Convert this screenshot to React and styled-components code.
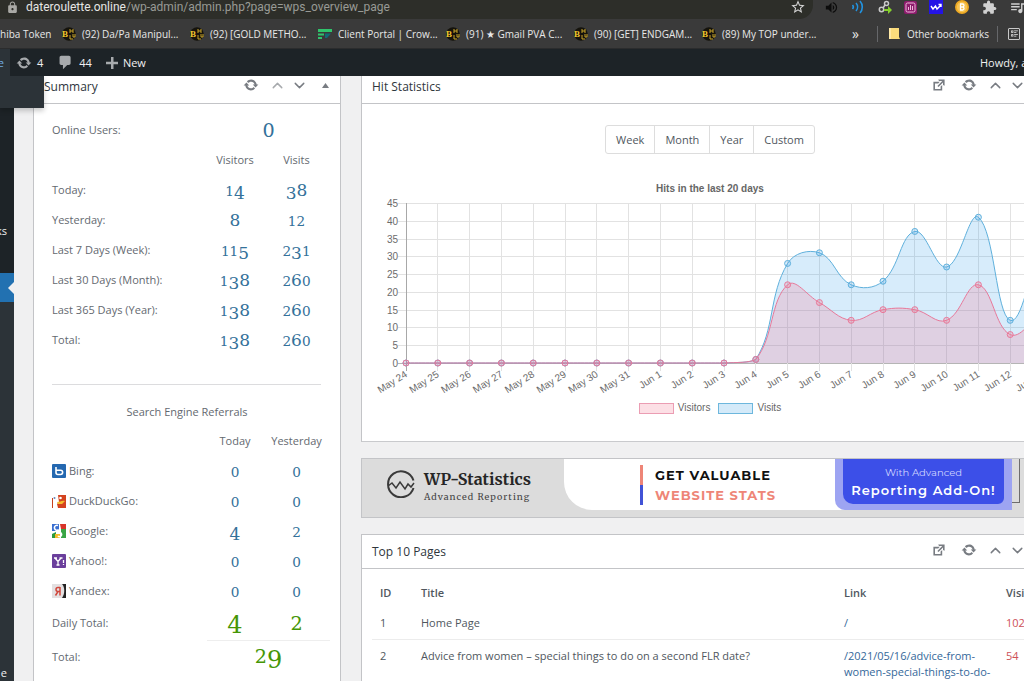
import React from "react";
import styled, { createGlobalStyle } from "styled-components";
import {
  MdLock,
  MdStarBorder,
  MdVolumeUp,
  MdExtension,
  MdQueueMusic,
} from "react-icons/md";
import { RiListCheck2 } from "react-icons/ri";
import { ChevronDown, ChevronUp } from "lucide-react";

const summary = [
  ["Today:", "14", "38"],
  ["Yesterday:", "8", "12"],
  ["Last 7 Days (Week):", "115", "231"],
  ["Last 30 Days (Month):", "138", "260"],
  ["Last 365 Days (Year):", "138", "260"],
  ["Total:", "138", "260"],
];

const bookmarks = [
  { label: "(92) Da/Pa Manipul...", icon: "bhw" },
  { label: "(92) [GOLD METHO...", icon: "bhw" },
  { label: "Client Portal | Crow...", icon: "portal" },
  { label: "(91) ★ Gmail PVA C...", icon: "bhw" },
  { label: "(90) [GET] ENDGAM...", icon: "bhw" },
  { label: "(89) My TOP under...", icon: "bhw" },
];

const days = [
  "May 24", "May 25", "May 26", "May 27", "May 28", "May 29", "May 30",
  "May 31", "Jun 1", "Jun 2", "Jun 3", "Jun 4", "Jun 5", "Jun 6", "Jun 7",
  "Jun 8", "Jun 9", "Jun 10", "Jun 11", "Jun 12", "Jun 13",
];
const visitors = [0, 0, 0, 0, 0, 0, 0, 0, 0, 0, 0, 1, 22, 17, 12, 15, 15, 12, 22, 8, 14];
const visits = [0, 0, 0, 0, 0, 0, 0, 0, 0, 0, 0, 1, 28, 31, 22, 23, 37, 27, 41, 12, 34];

/* ---------- icons ---------- */

const UpdateIcon = ({ size = 16 }) => (
  <svg width={size} height={size} viewBox="0 0 20 20" fill="currentColor">
    <path d="M10.2 3.28c3.53 0 6.43 2.61 6.92 6h2.08l-3.5 4-3.5-4h2.32c-.45-1.97-2.21-3.45-4.32-3.45-1.45 0-2.73.71-3.54 1.78L4.95 5.66C6.23 4.2 8.11 3.28 10.2 3.28zm-.4 13.44c-3.52 0-6.43-2.61-6.92-6H.8l3.5-4c1.17 1.33 2.33 2.67 3.5 4H5.48c.45 1.97 2.21 3.45 4.32 3.45 1.45 0 2.73-.71 3.54-1.78l1.71 1.95c-1.28 1.46-3.15 2.38-5.25 2.38z" />
  </svg>
);

const CommentIcon = () => (
  <svg width="17" height="17" viewBox="0 0 20 20" fill="currentColor">
    <path d="M5 2h9c1.1 0 2 .9 2 2v7c0 1.1-.9 2-2 2h-2l-5 5v-5H5c-1.1 0-2-.9-2-2V4c0-1.1.9-2 2-2z" />
  </svg>
);

const PlusIcon = () => (
  <svg width="12" height="12" viewBox="0 0 12 12" fill="currentColor">
    <path d="M5 0h2.500v4.700H12v2.500H7.500V12H5V7.200H0V4.700h5z" />
  </svg>
);

const ExternalIcon = () => (
  <svg width="16" height="16" viewBox="0 0 20 20" fill="currentColor">
    <path d="M9 3h8v8l-2-1V6.920l-5.600 5.590-1.410-1.410L14.080 5H10zm3 12v-3l2-2v7H3V6h8L9 8H5v7h7z" />
  </svg>
);

const TriangleIcon = () => (
  <svg width="7" height="5" viewBox="0 0 7 5" fill="currentColor">
    <path d="M3.500 0 7 5H0z" />
  </svg>
);

const BhwIcon = () => (
  <svg width="14" height="14" viewBox="0 0 14 14">
    <circle cx="7" cy="7" r="6.800" fill="#15130c" />
    <text x="0" y="10" fontSize="9" fontWeight="700" fontFamily="Liberation Serif, serif" fill="#f1c62f">
      B
    </text>
    <path d="M8 2v4M11 2v4M8 4h3M8 8v4M11 7v3M13 7v3M8 12h3M11 10h2" stroke="#c9a52a" strokeWidth="1" fill="none" />
  </svg>
);

const PortalIcon = () => (
  <svg width="14" height="14" viewBox="0 0 14 14">
    <path d="M0 2h14v3H0z" fill="#2fc46c" />
    <path d="M0 6.500h6v2H0zM0 10h4v2H0z" fill="#2fc46c" />
    <path d="M7 6.500h6L9 11H7z" fill="#116a75" />
  </svg>
);

const WavesIcon = () => (
  <svg width="14" height="14" viewBox="0 0 14 14" fill="none" stroke="#2293e0" strokeWidth="1.600">
    <path d="M1.500 5a3 3 0 0 1 0 4M5 3a6 6 0 0 1 0 8M9 1a9 9 0 0 1 0 12" />
  </svg>
);

const LinkDotsIcon = () => (
  <svg width="14" height="14" viewBox="0 0 14 14" fill="none">
    <circle cx="8.500" cy="3.500" r="2" stroke="#c9c9c9" strokeWidth="1.500" />
    <circle cx="3.500" cy="9.500" r="2.200" stroke="#c9c9c9" strokeWidth="1.500" />
    <path d="M7 5 5 8" stroke="#c9c9c9" strokeWidth="1.500" />
    <path d="M6 9h4V6l4 4-4 4v-3H6z" fill="#86d02d" />
  </svg>
);

const ChartAppIcon = () => (
  <svg width="13" height="13" viewBox="0 0 13 13" fill="none">
    <rect width="13" height="13" rx="2" fill="#8c1c6c" />
    <rect x="2" y="2" width="9" height="9" rx="1.500" stroke="#f0b7dc" />
    <path d="M4.500 6v3M6.500 4v5M8.500 5v4" stroke="#f0b7dc" />
  </svg>
);

const WalletIcon = () => (
  <svg width="14" height="14" viewBox="0 0 14 14" fill="none">
    <rect width="14" height="14" fill="#2413e6" />
    <path d="m2 6 2 3 2.500-3L8 9l4-4M9.500 4.500H12V7" stroke="#fff" strokeWidth="1.400" />
  </svg>
);

const CoinIcon = () => (
  <svg width="14" height="14" viewBox="0 0 14 14">
    <circle cx="7" cy="7" r="7" fill="#eda923" />
    <circle cx="7" cy="7" r="5.200" fill="#f6c352" />
    <path d="M5.500 4v6M5 4h2.500a1.500 1.500 0 0 1 0 3H5.500M7.500 7a1.500 1.500 0 0 1 0 3H5" stroke="#fff" strokeWidth="1.300" fill="none" />
  </svg>
);

const FolderIcon = () => (
  <svg width="11" height="13" viewBox="0 0 11 13">
    <path d="M0 1h10v9l1 2H0z" fill="#fbdc7c" />
    <path d="M0 1h2v11H0z" fill="#ffe9a6" />
  </svg>
);

const BingIcon = () => (
  <svg width="14" height="14" viewBox="0 0 14 14">
    <rect width="14" height="14" rx="1" fill="#2468b0" />
    <path d="M4 3v5.500M4 6.200h4.500a2 2 0 0 1 0 4.300H6a2 2 0 0 1-2-2" stroke="#fff" strokeWidth="1.600" fill="none" />
  </svg>
);

const DuckIcon = () => (
  <svg width="14" height="14" viewBox="0 0 14 14">
    <rect width="14" height="14" fill="#fff" />
    <path d="M0 4h1v10H0z" fill="#c8401d" />
    <circle cx="2.500" cy="4" r="1" fill="#6a87b8" />
    <path d="M6 1h8v13H6l-1-4 2-2z" fill="#d4431f" />
    <path d="M5 8c3 0 5-2 8-1l-3 3H6z" fill="#f6be2c" />
    <circle cx="8.500" cy="4" r="1.300" fill="#fff" />
  </svg>
);

const GoogleIcon = () => (
  <svg width="14" height="14" viewBox="0 0 14 14">
    <rect width="14" height="14" fill="#fff" />
    <path d="M0 0h7v7H0z" fill="#3a6fd0" />
    <path d="M8 0h6v5H9z" fill="#d8342a" />
    <path d="M9 5h5v9H9z" fill="#3aa545" />
    <path d="M0 10l4-2v6H0z" fill="#2d9a3f" />
    <path d="M3 10h5v4H3z" fill="#f4bc2c" />
    <path d="M6 1.500A2.500 2.500 0 1 0 6 6l3 3a2 2 0 0 1-3 3" fill="none" stroke="#fff" strokeWidth="1.600" />
  </svg>
);

const YahooIcon = () => (
  <svg width="14" height="14" viewBox="0 0 14 14">
    <rect width="14" height="14" rx="1" fill="#6b3f9c" />
    <path d="m3 4 3 3.500L9 4M6 7.500V11M2 4h3M7.500 4h3M4.500 11h3M11.500 6v3M11.500 10v1" stroke="#fff" strokeWidth="1.300" fill="none" />
  </svg>
);

const YandexIcon = () => (
  <svg width="14" height="14" viewBox="0 0 14 14">
    <rect width="14" height="14" fill="#222" />
    <path d="M0 0h10c3 3 3 10 0 14H0z" fill="#e3e0e1" />
    <path d="M8 3v8.500M8 3.500H6a2 2 0 0 0 0 4h2M6 7.500 3.500 11.500" stroke="#d0473c" strokeWidth="1.500" fill="none" />
  </svg>
);

const StatsLogo = () => (
  <svg width="28" height="28" viewBox="0 0 28 28" fill="none" stroke="#3a3a3a" strokeWidth="2">
    <path d="M26.500 10.500A13 13 0 1 0 26.500 18" />
    <path d="m1 16 4-3 4 5 4-6 5 7 3-5 3 3 3-4" strokeWidth="1.500" />
  </svg>
);

const engines = [
  { name: "Bing:", Icon: BingIcon, today: "0", yesterday: "0" },
  { name: "DuckDuckGo:", Icon: DuckIcon, today: "0", yesterday: "0" },
  { name: "Google:", Icon: GoogleIcon, today: "4", yesterday: "2" },
  { name: "Yahoo!:", Icon: YahooIcon, today: "0", yesterday: "0" },
  { name: "Yandex:", Icon: YandexIcon, today: "0", yesterday: "0" },
];

/* ---------- chart ---------- */

const X0 = 34;
const X1 = 670;
const Y0 = 167;
const Y1 = 7;
const MAX = 45;
const px = (i) => X0 + (i * (X1 - X0)) / (days.length - 1);
const py = (v) => Y0 - (v * (Y0 - Y1)) / MAX;
const clampY = (y) => Math.min(Y0, Math.max(Y1, y));

// smooth line through the points, tension 0.4
function curve(values) {
  const pts = values.map((v, i) => ({ x: px(i), y: py(v) }));
  const ctrl = pts.map((p, i) => {
    const prev = pts[i - 1] || p;
    const next = pts[i + 1] || p;
    const d01 = Math.hypot(p.x - prev.x, p.y - prev.y);
    const d12 = Math.hypot(next.x - p.x, next.y - p.y);
    const fa = (0.4 * d01) / (d01 + d12);
    const fb = (0.4 * d12) / (d01 + d12);
    return {
      inX: p.x - fa * (next.x - prev.x),
      inY: clampY(p.y - fa * (next.y - prev.y)),
      outX: p.x + fb * (next.x - prev.x),
      outY: clampY(p.y + fb * (next.y - prev.y)),
    };
  });
  return pts.reduce((d, p, i) => {
    if (i === 0) return `M${p.x},${p.y}`;
    const a = ctrl[i - 1];
    const b = ctrl[i];
    return `${d}C${a.outX},${a.outY} ${b.inX},${b.inY} ${p.x},${p.y}`;
  }, "");
}

function Series({ values, stroke, fill }) {
  const line = curve(values);
  return (
    <g>
      <path d={`${line}L${X1},${Y0}L${X0},${Y0}Z`} fill={fill} />
      <path d={line} fill="none" stroke={stroke} />
      {values.map((v, i) => (
        <circle key={days[i]} cx={px(i)} cy={py(v)} r="3" fill={fill} stroke={stroke} />
      ))}
    </g>
  );
}

function HitsChart() {
  const ticks = [0, 5, 10, 15, 20, 25, 30, 35, 40, 45];
  return (
    <ChartSvg viewBox="0 0 676 202" role="img" aria-label="Hits in the last 20 days">
      {ticks.map((t) => (
        <g key={t}>
          <line
            x1={X0 - 8}
            x2={X1}
            y1={Math.round(py(t)) + 0.5}
            y2={Math.round(py(t)) + 0.5}
            stroke={t === 0 ? "#b5b5b5" : "#e2e2e2"}
          />
          <text x={X0 - 8} y={Math.round(py(t)) + 4} textAnchor="end">
            {t}
          </text>
        </g>
      ))}
      {days.map((day, i) => (
        <g key={day}>
          <line
            x1={Math.floor(px(i)) + 0.5}
            x2={Math.floor(px(i)) + 0.5}
            y1={Y1}
            y2={Y0 + 8}
            stroke={i === 0 ? "#a8a8a8" : "#e2e2e2"}
          />
          <text
            textAnchor="end"
            transform={`translate(${px(i) + 2} ${Y0 + 13}) rotate(-32)`}
          >
            {day}
          </text>
        </g>
      ))}
      <Series values={visits} stroke="#5fb0dc" fill="rgba(54, 162, 235, 0.2)" />
      <Series values={visitors} stroke="#e8799a" fill="rgba(255, 99, 132, 0.2)" />
    </ChartSvg>
  );
}

/* ---------- parts ---------- */

// Old style figures: 0-2 sit at x-height, 3 4 5 7 9 hang below the line
function Figures({ children, size }) {
  return (
    <Figure $size={size}>
      {children.match(/[0-2]+|[34579]+|[68]+/g).map((run, i) => {
        if (/[0-2]/.test(run)) return <SmallDigits key={i}>{run}</SmallDigits>;
        if (/[34579]/.test(run)) return <LowDigits key={i}>{run}</LowDigits>;
        return run;
      })}
    </Figure>
  );
}

function PanelHeader({ title, external, muted }) {
  return (
    <Header>
      <PanelTitle>{title}</PanelTitle>
      <Actions>
        {external && (
          <ActionButton $wide aria-label="Open report">
            <ExternalIcon />
          </ActionButton>
        )}
        <ActionButton $wide aria-label="Refresh">
          <UpdateIcon />
        </ActionButton>
        <ActionButton $muted={muted} aria-label="Move up">
          <ChevronUp size={17} strokeWidth={2} />
        </ActionButton>
        <ActionButton aria-label="Move down">
          <ChevronDown size={17} strokeWidth={2} />
        </ActionButton>
        <ActionButton $wide aria-label="Toggle panel">
          <TriangleIcon />
        </ActionButton>
      </Actions>
    </Header>
  );
}

const StatColumns = () => (
  <colgroup>
    <col />
    <FirstStatCol />
    <SecondStatCol />
  </colgroup>
);

function App() {
  return (
    <Window>
      <GlobalStyle />
      <Toolbar>
        <AddressBar>
          <MdLock size={13} color="#a9a9a5" />
          <Url>
            <b>dateroulette.online</b>/wp-admin/admin.php?page=wps_overview_page
          </Url>
          <MdStarBorder size={16} color="#d5d5d5" />
        </AddressBar>
        <Extensions>
          <MdVolumeUp size={15} color="#0c0c0c" />
          <WavesIcon />
          <LinkDotsIcon />
          <ChartAppIcon />
          <WalletIcon />
          <CoinIcon />
          <MdExtension size={15} color="#d0d0d0" />
          <MdQueueMusic size={17} color="#d0d0d0" />
        </Extensions>
      </Toolbar>

      <BookmarkBar>
        <FirstBookmark href="#">hiba Token</FirstBookmark>
        {bookmarks.map(({ label, icon }) => (
          <Bookmark href="#" key={label}>
            {icon === "bhw" ? <BhwIcon /> : <PortalIcon />}
            {label}
          </Bookmark>
        ))}
        <BookmarkEnd>
          <MoreButton>»</MoreButton>
          <OtherBookmarks>
            <FolderIcon />
            Other bookmarks
          </OtherBookmarks>
          <ReadingList aria-label="Reading list">
            <RiListCheck2 size={9} />
          </ReadingList>
        </BookmarkEnd>
      </BookmarkBar>

      <AdminBar>
        <SiteName href="#">e</SiteName>
        <AdminItem href="#">
          <UpdateIcon />4
        </AdminItem>
        <AdminItem href="#">
          <CommentIcon />
          44
        </AdminItem>
        <AdminItem href="#">
          <PlusIcon />
          New
        </AdminItem>
        <Account href="#">Howdy, a</Account>
      </AdminBar>

      <Body>
        <SiteMenu />
        <SideMenu>
          <MenuTop>
            <MenuText href="#">ks</MenuText>
          </MenuTop>
          <MenuCurrent />
          <MenuBottom>
            <MenuText href="#">e</MenuText>
          </MenuBottom>
        </SideMenu>

        <Dashboard>
          <Panel>
            <PanelHeader title="Summary" muted />
            <SummaryBody>
              <StatTable>
                <StatColumns />
                <tbody>
                  <tr>
                    <StatLabel>Online Users:</StatLabel>
                    <StatCell colSpan={2}>
                      <Figures size={24}>0</Figures>
                    </StatCell>
                  </tr>
                  <tr>
                    <td />
                    <StatHead>Visitors</StatHead>
                    <StatHead>Visits</StatHead>
                  </tr>
                  {summary.map(([label, a, b]) => (
                    <tr key={label}>
                      <StatLabel>{label}</StatLabel>
                      <StatCell>
                        <Figures size={17}>{a}</Figures>
                      </StatCell>
                      <StatCell>
                        <Figures size={17}>{b}</Figures>
                      </StatCell>
                    </tr>
                  ))}
                </tbody>
              </StatTable>
              <Divider />
              <Caption>Search Engine Referrals</Caption>
              <StatTable>
                <StatColumns />
                <tbody>
                  <tr>
                    <td />
                    <StatHead>Today</StatHead>
                    <StatHead>Yesterday</StatHead>
                  </tr>
                  {engines.map(({ name, Icon, today, yesterday }) => (
                    <tr key={name}>
                      <StatLabel>
                        <EngineName>
                          <Icon />
                          {name}
                        </EngineName>
                      </StatLabel>
                      <StatCell>
                        <Figures size={17}>{today}</Figures>
                      </StatCell>
                      <StatCell>
                        <Figures size={17}>{yesterday}</Figures>
                      </StatCell>
                    </tr>
                  ))}
                  <TotalRow>
                    <StatLabel>Daily Total:</StatLabel>
                    <StatCell $total>
                      <Figures size={24}>4</Figures>
                    </StatCell>
                    <StatCell $total>
                      <Figures size={24}>2</Figures>
                    </StatCell>
                  </TotalRow>
                  <TotalRow>
                    <StatLabel>Total:</StatLabel>
                    <StatCell $total $ruled colSpan={2}>
                      <Figures size={24}>29</Figures>
                    </StatCell>
                  </TotalRow>
                </tbody>
              </StatTable>
            </SummaryBody>
          </Panel>

          <MainColumn>
            <Panel>
              <PanelHeader title="Hit Statistics" external />
              <ChartBody>
                <RangeGroup>
                  {["Week", "Month", "Year", "Custom"].map((range) => (
                    <RangeButton key={range}>{range}</RangeButton>
                  ))}
                </RangeGroup>
                <ChartTitle>Hits in the last 20 days</ChartTitle>
                <HitsChart />
                <Legend>
                  <Swatch $line="#eb9db3" $fill="#fcdfe5" />
                  <span>Visitors</span>
                  <Swatch $line="#6db7dd" $fill="#d4eaf9" />
                  <span>Visits</span>
                </Legend>
              </ChartBody>
            </Panel>

            <Banner>
              <Brand>
                <StatsLogo />
                <div>
                  <BrandName>WP-Statistics</BrandName>
                  <BrandTag>Advanced Reporting</BrandTag>
                </div>
              </Brand>
              <Promo>
                <PromoText>
                  GET VALUABLE
                  <em>WEBSITE STATS</em>
                </PromoText>
              </Promo>
              <AddOnBack>
                <AddOn href="#">
                  With Advanced
                  <b>Reporting Add-On!</b>
                </AddOn>
              </AddOnBack>
              <BannerFrame />
            </Banner>

            <Panel>
              <PanelHeader title="Top 10 Pages" external />
              <PagesBody>
                <PagesTable>
                  <colgroup>
                    <IdCol />
                    <col />
                    <LinkCol />
                    <VisitsCol />
                  </colgroup>
                  <thead>
                    <tr>
                      <th>ID</th>
                      <th>Title</th>
                      <th>Link</th>
                      <th>Visits</th>
                    </tr>
                  </thead>
                  <tbody>
                    <tr>
                      <td>1</td>
                      <td>Home Page</td>
                      <td>
                        <PageLink href="#">/</PageLink>
                      </td>
                      <VisitCount>102</VisitCount>
                    </tr>
                    <tr>
                      <td>2</td>
                      <td>Advice from women – special things to do on a second FLR date?</td>
                      <td>
                        <PageLink href="#">/2021/05/16/advice-from-women-special-things-to-do-</PageLink>
                      </td>
                      <VisitCount>54</VisitCount>
                    </tr>
                  </tbody>
                </PagesTable>
              </PagesBody>
            </Panel>
          </MainColumn>
        </Dashboard>
      </Body>
    </Window>
  );
}

const GlobalStyle = createGlobalStyle`
  * {
    box-sizing: border-box;
  }

  body {
    margin: 0;
    overflow: hidden;
    background: #f0f0f1;
    color: #50575e;
    font-family: "Segoe UI", "Open Sans", sans-serif;
    font-size: 11px;
    line-height: 16px;
  }

  a {
    color: inherit;
    text-decoration: none;
  }

  button {
    padding: 0;
    border: 0;
    background: none;
    color: inherit;
    font: inherit;
    cursor: pointer;
  }

  svg {
    flex: none;
  }
`;

const Window = styled.div`
  display: flex;
  flex-direction: column;
  height: 100vh;
  overflow: hidden;
`;

const Toolbar = styled.div`
  display: flex;
  flex: none;
  height: 19px;
  background: #3a3a3a;
`;

const AddressBar = styled.div`
  display: flex;
  flex: 1;
  align-items: center;
  padding: 0 7px 5px 6px;
  border-bottom-right-radius: 14px;
  background: #2d2e29;
`;

const Url = styled.span`
  flex: 1;
  padding-left: 7px;
  color: #989a95;
  font-family: "Segoe UI", Roboto, sans-serif;
  font-size: 12px;

  b {
    color: #e6e6e4;
    font-weight: 400;
  }
`;

const Extensions = styled.div`
  display: flex;
  flex: none;
  align-items: center;
  justify-content: space-between;
  width: 213px;
  margin-right: -2px;
  padding: 0 0 5px 11px;
`;

const BookmarkBar = styled.nav`
  display: flex;
  flex: none;
  align-items: center;
  height: 30px;
  border-bottom: 1px solid #2b2c2d;
  background: #3a3a3a;
  color: #e8e8e8;
  font-size: 10px;
  white-space: nowrap;
`;

const FirstBookmark = styled.a`
  width: 62px;
`;

const Bookmark = styled.a`
  display: flex;
  align-items: center;
  gap: 6px;
  width: 128px;
`;

const BookmarkEnd = styled.div`
  display: flex;
  align-items: center;
  margin-left: auto;
`;

const MoreButton = styled.button`
  padding-right: 18px;
  font-size: 14px;
`;

const OtherBookmarks = styled.button`
  display: flex;
  align-items: center;
  gap: 7px;
  padding: 0 8px 0 11px;
  border: solid #66676a;
  border-width: 0 1px;
`;

const ReadingList = styled.button`
  display: flex;
  align-items: center;
  justify-content: center;
  width: 12px;
  height: 12px;
  margin: 0 4px 0 10px;
  border: 1px solid #c8c8c8;
  border-radius: 1px;
`;

const AdminBar = styled.header`
  display: flex;
  flex: none;
  align-items: center;
  position: relative;
  z-index: 2;
  height: 27px;
  background: #1d2327;
  color: #f0f0f1;

  svg {
    color: #a7aaad;
  }
`;

const SiteName = styled.a`
  display: flex;
  justify-content: flex-end;
  width: 10px;
  margin-right: 6px;
  padding-right: 6px;
  background: #2c3338;
  color: #72aee6;
  line-height: 27px;
`;

const AdminItem = styled.a`
  display: flex;
  align-items: center;
  gap: 5px;
  margin-right: 14px;
`;

const Account = styled.a`
  width: 44px;
  margin-left: auto;
  white-space: nowrap;
`;

const Body = styled.div`
  display: flex;
  flex: 1;
  position: relative;
  min-height: 0;
`;

// open site menu hanging under the admin bar
const SiteMenu = styled.div`
  position: absolute;
  top: 0;
  left: 0;
  z-index: 1;
  width: 44px;
  height: 32px;
  background: #2c3338;
  box-shadow: 0 3px 5px rgba(0, 0, 0, 0.2);
`;

const SideMenu = styled.nav`
  display: flex;
  flex: none;
  flex-direction: column;
  width: 14px;
  background: #2c3338;
  color: #f0f0f1;
`;

const MenuTop = styled.div`
  display: flex;
  align-items: flex-end;
  height: 197px;
  padding-bottom: 34px;
  background: #1d2327;
`;

const MenuCurrent = styled.div`
  display: flex;
  align-items: center;
  justify-content: flex-end;
  height: 29px;
  background: #2271b1;

  &::after {
    content: "";
    border: solid transparent;
    border-width: 6px 6px 6px 0;
    border-right-color: #f0f0f1;
  }
`;

const MenuBottom = styled.div`
  display: flex;
  flex: 1;
  align-items: flex-end;
`;

const MenuText = styled.a`
  display: flex;
  justify-content: flex-end;
  width: 7px;
`;

// scrolled a little, so the first panels start under the admin bar
const Dashboard = styled.main`
  display: grid;
  flex: none;
  grid-template-columns: 308px 1fr;
  gap: 20px;
  width: calc(100% + 21px);
  height: calc(100% + 7px);
  margin-top: -7px;
  padding-left: 19px;
`;

const MainColumn = styled.div`
  display: grid;
  grid-template-rows: 373px 60px 1fr;
  gap: 16px;
`;

const Panel = styled.section`
  border: 1px solid #c3c4c7;
  border-bottom-color: #c9cacd;
  background: #fff;
`;

const Header = styled.div`
  display: flex;
  align-items: center;
  justify-content: space-between;
  height: 34px;
  border-bottom: 1px solid #c3c4c7;
`;

const PanelTitle = styled.h2`
  margin: 0;
  padding-left: 10px;
  color: #2f363c;
  font-size: 12px;
  font-weight: 500;
`;

const Actions = styled.div`
  display: flex;
  align-self: flex-start;
`;

const ActionButton = styled.button`
  display: flex;
  align-items: center;
  justify-content: center;
  width: ${({ $wide }) => ($wide ? 30 : 22)}px;
  height: 30px;
  color: ${({ $muted }) => ($muted ? "#a7aaad" : "#787c82")};
`;

const SummaryBody = styled.div`
  padding: 11px 10px 0 18px;
`;

const StatTable = styled.table`
  width: 100%;
  border-collapse: collapse;
  table-layout: fixed;

  tr {
    height: 30px;
  }

  td,
  th {
    padding: 0;
  }
`;

const FirstStatCol = styled.col`
  width: 56px;
`;

const SecondStatCol = styled.col`
  width: 67px;
`;

const StatLabel = styled.th`
  font-weight: 400;
  text-align: left;
  color: #646970;
`;

const StatHead = styled.th`
  color: #646970;
  font-weight: 400;
`;

const StatCell = styled.td`
  border-top: ${({ $ruled }) => ($ruled ? "1px solid #eeeeee" : "0")};
  color: ${({ $total }) => ($total ? "#459605" : "#34719a")};
  text-align: center;
`;

const TotalRow = styled.tr`
  && {
    height: 34px;
  }
`;

const Figure = styled.span`
  font-family: "DejaVu Serif", serif;
  font-size: ${({ $size }) => $size}px;
  line-height: 24px;
`;

const SmallDigits = styled.span`
  font-size: 0.8em;
`;

const LowDigits = styled.span`
  vertical-align: -0.2em;
  line-height: 1;
`;

const Divider = styled.hr`
  height: 1px;
  margin: 29px 9px 13px 0;
  border: 0;
  background: #dcdcde;
`;

const Caption = styled.div`
  margin-left: -8px;
  color: #646970;
  line-height: 28px;
  text-align: center;
`;

const EngineName = styled.span`
  display: flex;
  align-items: center;
  gap: 3px;
`;

const ChartBody = styled.div`
  display: flex;
  flex-direction: column;
  align-items: center;
  padding: 21px 10px 0;
`;

const RangeGroup = styled.div`
  display: flex;
  border: 1px solid #dddddd;
  border-radius: 3px;
`;

const RangeButton = styled.button`
  padding: 0 10px;
  line-height: 27px;

  & + & {
    border-left: 1px solid #dddddd;
  }
`;

const ChartTitle = styled.div`
  margin-top: 28px;
  color: #666;
  font-family: "Liberation Sans", sans-serif;
  font-size: 10px;
  font-weight: 700;
  line-height: 14px;
`;

const ChartSvg = styled.svg`
  width: 100%;

  text {
    fill: #6b6b6b;
    font-family: "Liberation Sans", sans-serif;
    font-size: 10px;
  }
`;

const Legend = styled.div`
  display: flex;
  align-items: center;
  gap: 4px;
  margin-top: 3px;
  color: #666;
  font-family: "Liberation Sans", sans-serif;
  font-size: 10px;
  line-height: 14px;
`;

const Swatch = styled.span`
  width: 35px;
  height: 11px;
  border: 1px solid ${({ $line }) => $line};
  background: ${({ $fill }) => $fill};

  span + & {
    margin-left: 4px;
  }
`;

const Banner = styled.section`
  display: flex;
  border: 1px solid #c3c4c7;
  background: #dcdcdc;
`;

const Brand = styled.div`
  display: flex;
  flex: none;
  gap: 9px;
  width: 202px;
  padding: 11px 0 0 25px;
`;

const BrandName = styled.div`
  color: #262626;
  font-family: Merriweather, "DejaVu Serif Condensed", "DejaVu Serif", serif;
  font-size: 16px;
  font-weight: 700;
  line-height: 18px;
`;

const BrandTag = styled.div`
  color: #444;
  font-family: Merriweather, "DejaVu Serif Condensed", "DejaVu Serif", serif;
  font-size: 9px;
  letter-spacing: 1px;
  line-height: 18px;
`;

const Promo = styled.div`
  flex: 1;
  height: 51px;
  padding: 6px 0 0 76px;
  border-bottom-left-radius: 28px;
  background: #fff;
`;

const PromoText = styled.div`
  padding-left: 12px;
  border-left: 3px solid;
  border-image: linear-gradient(#ee8577 50%, #4152d6 50%) 1;
  color: #111;
  font-family: Montserrat, Inter, sans-serif;
  font-size: 13px;
  font-weight: 700;
  letter-spacing: 1px;
  line-height: 20px;

  em {
    display: block;
    color: #ee8577;
    font-style: normal;
  }
`;

const AddOnBack = styled.div`
  width: 177px;
  height: 51px;
  padding: 0 8px 6px;
  border-bottom-left-radius: 10px;
  background: #9da4f2;
  box-shadow: -12px 0 #fff;
`;

const AddOn = styled.a`
  display: block;
  height: 45px;
  padding-top: 6px;
  border-radius: 0 0 6px 10px;
  background: #3c4fe8;
  color: #cfd4ff;
  font-family: Montserrat, Inter, sans-serif;
  font-size: 10px;
  text-align: center;

  b {
    display: block;
    color: #fff;
    font-size: 13px;
    font-weight: 600;
    letter-spacing: 1px;
    line-height: 18px;
  }
`;

const BannerFrame = styled.div`
  width: 8px;
  height: 44px;
  margin-right: 38px;
  border: solid #6d6d6d;
  border-width: 0 1px 1px 0;
`;

const PagesBody = styled.div`
  padding: 8px 10px 0;
`;

const PagesTable = styled.table`
  width: 100%;
  border-collapse: collapse;
  table-layout: fixed;

  th,
  td {
    padding: 8px 0 8px 8px;
    text-align: left;
    vertical-align: top;
  }

  th {
    padding-bottom: 6px;
    font-weight: 600;
  }

  tbody tr + tr {
    border-top: 1px solid #ececec;
  }
`;

const IdCol = styled.col`
  width: 41px;
`;

const LinkCol = styled.col`
  width: 162px;
`;

const VisitsCol = styled.col`
  width: 50px;
`;

const PageLink = styled.a`
  color: #35689a;
`;

const VisitCount = styled.td`
  color: #cd5058;
`;

export default App;
